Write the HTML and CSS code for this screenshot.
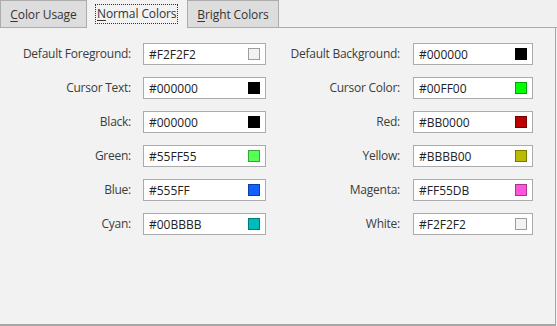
FILE: index.html
```html
<!DOCTYPE html>
<html>
<head>
<meta charset="utf-8">
<link rel="stylesheet" href="styles.css">
</head>
<body>
<div class="window">
  <div class="tabs">
    <div class="tab"><span class="tab-label"><u>C</u>olor Usage</span></div>
    <div class="tab active"><span class="tab-label focus"><u>N</u>ormal Colors</span></div>
    <div class="tab"><span class="tab-label"><u>B</u>right Colors</span></div>
    <div class="tab-fill"></div>
  </div>
  <div class="panel">
    <div class="grid">
      <label class="lbl">Default Foreground:</label>
      <div class="field"><span class="val">#F2F2F2</span><span class="sw" style="background:#f2f2f2"></span></div>
      <label class="lbl lbl-r">Default Background:</label>
      <div class="field narrow"><span class="val">#000000</span><span class="sw" style="background:#000000"></span></div>

      <label class="lbl">Cursor Text:</label>
      <div class="field"><span class="val">#000000</span><span class="sw" style="background:#000000"></span></div>
      <label class="lbl lbl-r">Cursor Color:</label>
      <div class="field narrow"><span class="val">#00FF00</span><span class="sw" style="background:#00ff00"></span></div>

      <label class="lbl">Black:</label>
      <div class="field"><span class="val">#000000</span><span class="sw" style="background:#000000"></span></div>
      <label class="lbl lbl-r">Red:</label>
      <div class="field narrow"><span class="val">#BB0000</span><span class="sw" style="background:#bb0000"></span></div>

      <label class="lbl">Green:</label>
      <div class="field"><span class="val">#55FF55</span><span class="sw" style="background:#55ff55"></span></div>
      <label class="lbl lbl-r">Yellow:</label>
      <div class="field narrow"><span class="val">#BBBB00</span><span class="sw" style="background:#bbbb00"></span></div>

      <label class="lbl">Blue:</label>
      <div class="field"><span class="val">#555FF</span><span class="sw" style="background:#155fff"></span></div>
      <label class="lbl lbl-r">Magenta:</label>
      <div class="field narrow"><span class="val">#FF55DB</span><span class="sw" style="background:#ff55db"></span></div>

      <label class="lbl">Cyan:</label>
      <div class="field"><span class="val">#00BBBB</span><span class="sw" style="background:#00bbbb"></span></div>
      <label class="lbl lbl-r">White:</label>
      <div class="field narrow"><span class="val">#F2F2F2</span><span class="sw" style="background:#f2f2f2"></span></div>
    </div>
  </div>
</div>
</body>
</html>
```
FILE: styles.css
```css
html, body {
  margin: 0;
  padding: 0;
  background: #f0f0f0;
}
body {
  font-family: "Open Sans", "Noto Sans", sans-serif;
  font-size: 12px;
  color: #333;
}
.window {
  width: 557px;
  height: 326px;
  display: flex;
  flex-direction: column;
}
.tabs {
  display: flex;
  height: 28px;
  flex: none;
}
.tab {
  box-sizing: border-box;
  height: 28px;
  border: 1px solid #acacac;
  background: #dddddd;
  display: flex;
  align-items: center;
  justify-content: center;
  color: #333;
}
.tab:nth-child(1) { width: 87px; }
.tab:nth-child(2) { width: 100px; }
.tab:nth-child(3) { width: 92px; }
.tab.active {
  border: none;
  background: #f2f2f2;
  padding-left: 9px;
  justify-content: flex-start;
}
.tab-label { letter-spacing: -0.1px; }
.tab-label u { text-decoration: underline; text-underline-offset: 2px; }
.focus {
  outline: 1px dotted #333;
  outline-offset: 0;
  padding: 1px;
  line-height: 16px;
}
.tab-fill {
  flex: 1;
  border-bottom: 1px solid #acacac;
}
.panel {
  flex: 1;
  box-sizing: border-box;
  background: #f2f2f2;
  border-right: 1px solid #a6a6a6;
  border-bottom: 2px solid #a6a6a6;
  margin-right: 1px;
  padding-top: 15px;
}
.grid {
  display: grid;
  grid-template-columns: 143px 123px 147px 120px;
  grid-auto-rows: 22px;
  row-gap: 12px;
}
.lbl {
  text-align: right;
  padding-right: 12px;
  line-height: 22px;
  color: #3c3c3c;
  letter-spacing: -0.25px;
}
.lbl-r { padding-right: 13px; }
.field {
  box-sizing: border-box;
  border: 1px solid #ababab;
  background: #fff;
  display: flex;
  align-items: center;
  padding-left: 5px;
  padding-right: 5px;
  color: #222;
}
.val { flex: 1; }
.sw {
  width: 12px;
  height: 12px;
  box-sizing: border-box;
  border: 1px solid rgba(0, 0, 0, 0.35);
}
```
